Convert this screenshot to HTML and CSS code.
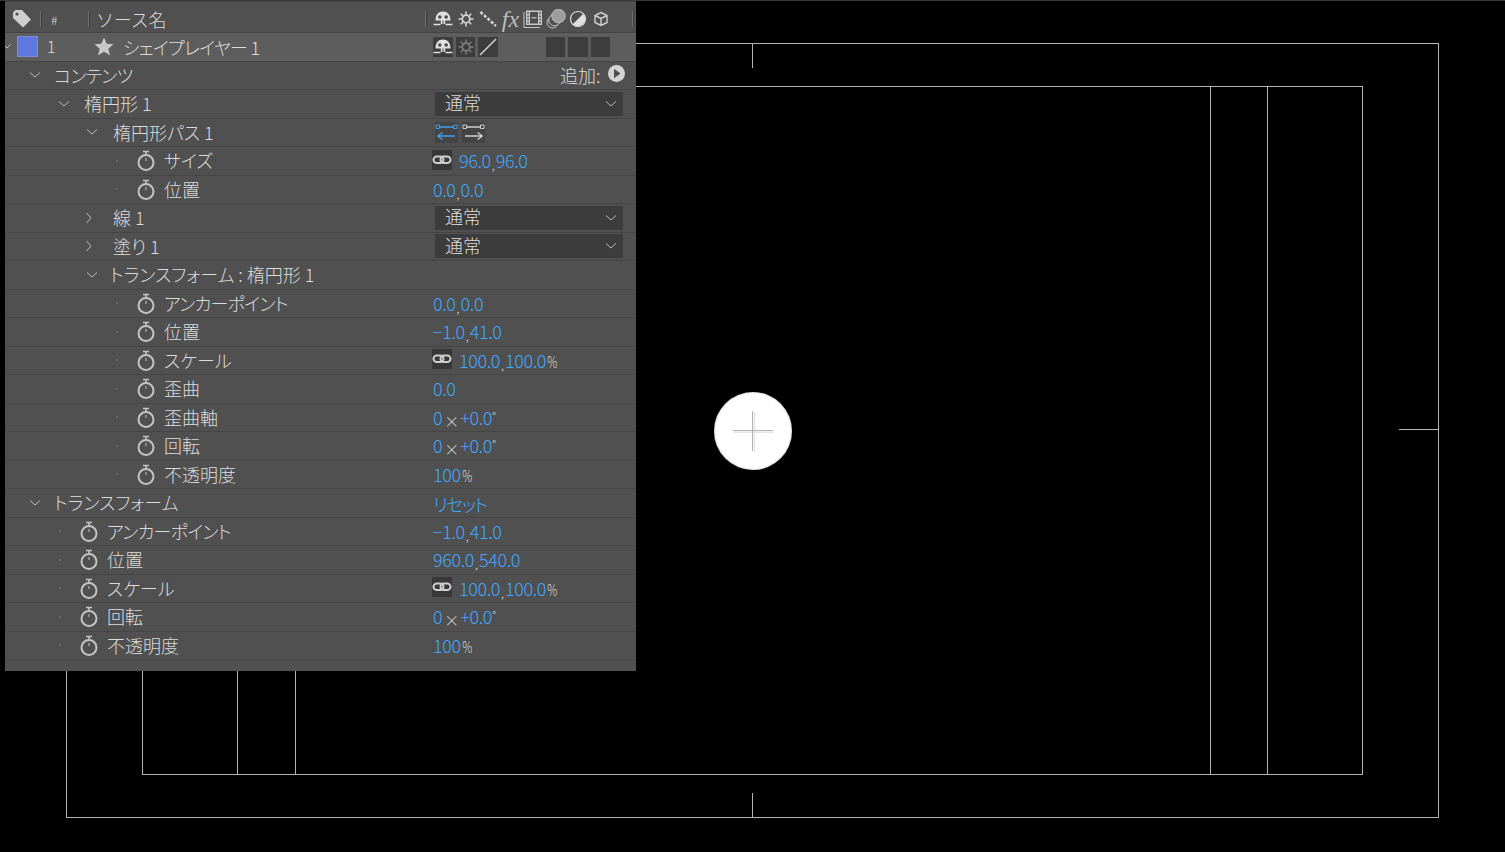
FILE: index.html
```html
<!DOCTYPE html>
<html lang="ja">
<head>
<meta charset="utf-8">
<title>シェイプレイヤー</title>
<link rel="stylesheet" href="styles.css">
</head>
<body>
<svg class="defs" width="0" height="0" aria-hidden="true">
  <symbol id="down" viewBox="0 0 12 8"><path d="M1 1.500 6 6l5-4.500" fill="none" stroke="#bdbdbd" stroke-width="1"/></symbol>
  <symbol id="right" viewBox="0 0 8 12"><path d="M1.500 1 6 6l-4.500 5" fill="none" stroke="#bdbdbd" stroke-width="1"/></symbol>
  <symbol id="watch" viewBox="0 0 18 21"><path d="M6 1.500h6M9 1.500v3" stroke="#c4c4c4" stroke-width="1.600" fill="none"/><circle cx="9" cy="12.500" r="7.500" fill="none" stroke="#c4c4c4" stroke-width="2"/><path d="M9 8v3" stroke="#c4c4c4" stroke-width="1" /></symbol>
  <symbol id="link" viewBox="0 0 20 20"><rect width="20" height="20" fill="#383838"/><rect x="1.500" y="6.500" width="10" height="6.500" rx="3.250" fill="none" stroke="#cfcfcf" stroke-width="2"/><rect x="8.500" y="6.500" width="10" height="6.500" rx="3.250" fill="none" stroke="#cfcfcf" stroke-width="2"/></symbol>
  <symbol id="shy" viewBox="0 0 20 20"><path d="M2.500 11.500C2.500 5.500 5.500 2.500 10 2.500s7.500 3 7.500 9h-5.300v3.500H7.800v-3.500z" fill="#e0e0e0"/><circle cx="6.800" cy="8" r="1.800" fill="#4a4a4a"/><circle cx="13.200" cy="8" r="1.800" fill="#4a4a4a"/><path d="M10 11.500v3.500" stroke="#4a4a4a" stroke-width="1"/><path d="M0.500 15.500h7M12.500 15.500h7" stroke="#e0e0e0" stroke-width="1.300"/></symbol>
  <symbol id="sun" viewBox="0 0 20 20"><circle cx="10" cy="10" r="3.800" fill="none" stroke="currentColor" stroke-width="1.800"/><path d="M10 2.500v3M10 14.500v3M2.500 10h3M14.500 10h3M4.700 4.700l2.100 2.100M13.200 13.200l2.100 2.100M4.700 15.300l2.100-2.100M13.200 6.800l2.100-2.100" stroke="currentColor" stroke-width="1.500"/></symbol>
</svg>

<main class="stage">
  <div class="guide outer"></div>
  <div class="guide inner"></div>
  <div class="guide v1"></div>
  <div class="guide v2"></div>
  <div class="guide v3"></div>
  <div class="guide v4"></div>
  <div class="guide t1"></div>
  <div class="guide t2"></div>
  <div class="guide t3"></div>
  <div class="handle"><svg width="42" height="42" viewBox="0 0 42 42"><path d="M1 21.500h40M21.500 1v40" stroke="#e4e4e4" stroke-width="1.500" transform="translate(.8 .8)"/><path d="M1 20.500h40M20.500 1v40" stroke="#b4b4b4" stroke-width="1"/></svg></div>
</main>

<section class="panel">
  <header class="head">
    <svg class="h-tag" width="20" height="20" viewBox="0 0 20 20"><path d="M1 3.500 3.500 1H10l9 9.500-8 8L1 9z" fill="#cfcfcf"/><circle cx="5" cy="5" r="1.600" fill="#4f4f4f"/></svg>
    <span class="bar b1"></span>
    <span class="hash">#</span>
    <span class="bar b2"></span>
    <span class="src">ソース名</span>
    <span class="bar b3"></span>
    <div class="h-icons">
      <svg class="ic"><use href="#shy"/></svg>
      <svg class="ic sunc"><use href="#sun"/></svg>
      <svg class="ic" viewBox="0 0 20 20"><path d="M2.500 3 18 17" stroke="#d4d4d4" stroke-width="2.600" stroke-dasharray="3 1.700" fill="none"/></svg>
      <span class="fx">fx</span>
      <svg class="ic" viewBox="0 0 20 20"><path d="M1 3v15.500h16" fill="none" stroke="#c8c8c8" stroke-width="1"/><rect x="3" y="1.500" width="16" height="14.500" fill="#c8c8c8"/><rect x="7" y="3" width="8" height="11.500" fill="#4f4f4f"/><path d="M8.500 8.800h5" stroke="#c8c8c8" stroke-width="1.200"/><path d="M4.300 3.200h1.500v1.800H4.300zM4.300 6.500h1.500v1.800H4.300zM4.300 9.800h1.500v1.800H4.300zM4.300 13h1.500v1.500H4.300zM16.300 3.200h1.500v1.800h-1.500zM16.300 6.500h1.500v1.800h-1.500zM16.300 9.800h1.500v1.800h-1.500zM16.300 13h1.500v1.500h-1.500z" fill="#4f4f4f"/></svg>
      <svg class="ic" viewBox="0 0 20 20"><circle cx="6.500" cy="13.500" r="5.500" fill="none" stroke="#c4c4c4"/><circle cx="8.500" cy="11" r="5.800" fill="#505050" stroke="#c4c4c4"/><circle cx="12.500" cy="7" r="6.800" fill="#9c9c9c" stroke="#c8c8c8" stroke-width=".8"/></svg>
      <svg class="ic" viewBox="0 0 20 20"><circle cx="10" cy="10" r="7.500" fill="#4d4d4d" stroke="#dedede" stroke-width="1.200"/><path d="M15.300 4.700A7.500 7.500 0 0 1 4.700 15.300z" fill="#dedede"/></svg>
      <svg class="ic" viewBox="0 0 20 20"><path d="M10 3.500 16 6.500v7l-6 3-6-3v-7zM4 6.500l6 3 6-3M10 9.500v7" fill="none" stroke="#d0d0d0" stroke-width="1.400"/></svg>
    </div>
    <span class="bar b4"></span>
  </header>

  <div class="row layer">
    <div class="name lay">
      <svg class="tw" width="8" height="6" viewBox="0 0 8 6"><path d="M0 2 2 4 6 0" fill="none" stroke="#bdbdbd"/></svg>
      <span class="swatch"></span>
      <span class="num">1</span>
      <svg class="star" width="20" height="19" viewBox="0 0 20 19"><path d="M10 .5l2.700 6.300 6.800.500-5.200 4.400 1.700 6.600L10 14.700l-6 3.600 1.700-6.600L.5 7.300l6.800-.500z" fill="#c8c8c8"/></svg>
      <span class="tight">シェイプレイヤー 1</span>
    </div>
    <div class="switches">
      <span class="sw"><svg class="ic"><use href="#shy"/></svg></span>
      <span class="sw dim"><svg class="ic"><use href="#sun"/></svg></span>
      <span class="sw"><svg class="ic" viewBox="0 0 20 20"><path d="M2 18 18 2" stroke="#cfcfcf" stroke-width="1.600"/></svg></span>
      <span class="sw gap"></span>
      <span class="sw"></span>
      <span class="sw"></span>
    </div>
  </div>

  <div class="row"><div class="name i0"><svg class="chev"><use href="#down"/></svg><span class="tight">コンテンツ</span></div>
    <div class="add"><span>追加:</span><svg width="17" height="17" viewBox="0 0 17 17"><circle cx="8.500" cy="8.500" r="8.500" fill="#d4d4d4"/><path d="M6 3.800 12.500 8.500 6 13.200z" fill="#4d4d4d"/></svg></div></div>
  <div class="row"><div class="name i1"><svg class="chev"><use href="#down"/></svg><span>楕円形 1</span></div>
    <div class="select"><span>通常</span><svg class="chev"><use href="#down"/></svg></div></div>
  <div class="row"><div class="name i2"><svg class="chev"><use href="#down"/></svg><span>楕円形パス 1</span></div>
    <div class="dirs">
      <svg width="23" height="21" viewBox="0 0 23 21"><rect width="23" height="21" fill="#444"/><path d="M3 5h17M3 14h17M2.500 14l5-3.500M2.500 14l5 3.500" stroke="#3b9ff0" stroke-width="1.500" fill="none"/><path d="M1 3h3.500v3.500H1zM18.500 3H22v3.500h-3.500z" fill="#444" stroke="#3b9ff0"/></svg>
      <svg width="23" height="21" viewBox="0 0 23 21"><rect width="23" height="21" fill="#444"/><path d="M3 5h17M3 14h17M20.500 14l-5-3.500M20.500 14l-5 3.500" stroke="#cfcfcf" stroke-width="1.500" fill="none"/><path d="M1 3h3.500v3.500H1zM18.500 3H22v3.500h-3.500z" fill="#444" stroke="#cfcfcf"/></svg>
    </div></div>
  <div class="row"><div class="name p2"><i class="dot"></i><svg class="watch"><use href="#watch"/></svg><span>サイズ</span></div>
    <div class="val"><svg class="lnk"><use href="#link"/></svg><b>96.0</b><em>,</em><b>96.0</b></div></div>
  <div class="row"><div class="name p2"><i class="dot"></i><svg class="watch"><use href="#watch"/></svg><span>位置</span></div>
    <div class="val"><b>0.0</b><em>,</em><b>0.0</b></div></div>
  <div class="row"><div class="name i2c"><svg class="chevr"><use href="#right"/></svg><span>線 1</span></div>
    <div class="select"><span>通常</span><svg class="chev"><use href="#down"/></svg></div></div>
  <div class="row"><div class="name i2c"><svg class="chevr"><use href="#right"/></svg><span>塗り 1</span></div>
    <div class="select"><span>通常</span><svg class="chev"><use href="#down"/></svg></div></div>
  <div class="row"><div class="name i2t"><svg class="chev"><use href="#down"/></svg><span>トランスフォーム : 楕円形 1</span></div></div>
  <div class="row"><div class="name p2"><i class="dot"></i><svg class="watch"><use href="#watch"/></svg><span class="tight">アンカーポイント</span></div>
    <div class="val"><b>0.0</b><em>,</em><b>0.0</b></div></div>
  <div class="row"><div class="name p2"><i class="dot"></i><svg class="watch"><use href="#watch"/></svg><span>位置</span></div>
    <div class="val"><b>−1.0</b><em>,</em><b>41.0</b></div></div>
  <div class="row"><div class="name p2"><i class="dot"></i><svg class="watch"><use href="#watch"/></svg><span>スケール</span></div>
    <div class="val"><svg class="lnk"><use href="#link"/></svg><b>100.0</b><em>,</em><b>100.0</b><small>%</small></div></div>
  <div class="row"><div class="name p2"><i class="dot"></i><svg class="watch"><use href="#watch"/></svg><span>歪曲</span></div>
    <div class="val"><b>0.0</b></div></div>
  <div class="row"><div class="name p2"><i class="dot"></i><svg class="watch"><use href="#watch"/></svg><span>歪曲軸</span></div>
    <div class="val"><b>0</b><small class="x">×</small><b>+0.0</b><small class="deg">°</small></div></div>
  <div class="row"><div class="name p2"><i class="dot"></i><svg class="watch"><use href="#watch"/></svg><span>回転</span></div>
    <div class="val"><b>0</b><small class="x">×</small><b>+0.0</b><small class="deg">°</small></div></div>
  <div class="row"><div class="name p2"><i class="dot"></i><svg class="watch"><use href="#watch"/></svg><span>不透明度</span></div>
    <div class="val"><b>100</b><small>%</small></div></div>
  <div class="row"><div class="name i0t"><svg class="chev"><use href="#down"/></svg><span>トランスフォーム</span></div>
    <div class="val"><b class="reset">リセット</b></div></div>
  <div class="row"><div class="name p0"><i class="dot"></i><svg class="watch"><use href="#watch"/></svg><span class="tight">アンカーポイント</span></div>
    <div class="val"><b>−1.0</b><em>,</em><b>41.0</b></div></div>
  <div class="row"><div class="name p0"><i class="dot"></i><svg class="watch"><use href="#watch"/></svg><span>位置</span></div>
    <div class="val"><b>960.0</b><em>,</em><b>540.0</b></div></div>
  <div class="row"><div class="name p0"><i class="dot"></i><svg class="watch"><use href="#watch"/></svg><span>スケール</span></div>
    <div class="val"><svg class="lnk"><use href="#link"/></svg><b>100.0</b><em>,</em><b>100.0</b><small>%</small></div></div>
  <div class="row"><div class="name p0"><i class="dot"></i><svg class="watch"><use href="#watch"/></svg><span>回転</span></div>
    <div class="val"><b>0</b><small class="x">×</small><b>+0.0</b><small class="deg">°</small></div></div>
  <div class="row"><div class="name p0"><i class="dot"></i><svg class="watch"><use href="#watch"/></svg><span>不透明度</span></div>
    <div class="val"><b>100</b><small>%</small></div></div>
</section>
</body>
</html>
```
FILE: styles.css
```css
html, body { margin: 0; height: 100%; background: #000; overflow: hidden; }
body { font-family: "Noto Sans CJK JP", "Noto Sans", sans-serif; font-weight: 300; color: #dcdcdc; font-size: 18px; font-feature-settings: "palt"; position: relative; }
.defs { position: absolute; }

.stage { position: absolute; inset: 0; border-top: 1px solid #3a3a3a; box-sizing: border-box; }
.guide { position: absolute; background: #b4b4b4; }
.outer { left: 66px; top: 42px; width: 1371px; height: 773px; background: none; border: 1px solid #b4b4b4; }
.inner { left: 142px; top: 85px; width: 1219px; height: 687px; background: none; border: 1px solid #b4b4b4; }
.v1, .v2, .v3, .v4 { top: 85px; width: 1px; height: 688px; }
.v1 { left: 237px; }
.v2 { left: 295px; }
.v3 { left: 1210px; }
.v4 { left: 1267px; }
.t1, .t2 { left: 752px; width: 1px; height: 24px; }
.t1 { top: 43px; }
.t2 { top: 792px; }
.t3 { left: 1399px; top: 428px; width: 39px; height: 1px; }
.handle { position: absolute; left: 714px; top: 391px; width: 78px; height: 78px; border-radius: 50%; background: #fff; box-shadow: inset 0 0 2px #999; display: flex; align-items: center; justify-content: center; }

.panel { position: absolute; left: 5px; top: 1px; width: 631px; height: 670px; background: #505050; }
.head { height: 32px; box-sizing: border-box; padding-top: 4px; display: flex; align-items: center; border-top: 1px solid #454545; border-bottom: 1px solid #444; }
.h-tag { margin-left: 7px; }
.bar { width: 1px; height: 16px; background: #6e6e6e; border-right: 1px solid #3c3c3c; flex: none; }
.b1 { margin-left: 8px; }
.hash { font-size: 12px; margin-left: 9px; width: 37px; }
.src { margin-left: 6px; width: 329px; font-size: 18px; font-feature-settings: normal; letter-spacing: -0.2px; }
.h-icons { display: flex; gap: 2.500px; margin-left: 6px; width: 199px; }
.ic { width: 20px; height: 20px; display: block; flex: none; }
.sunc { color: #d8d8d8; }
.fx { width: 20px; font: italic 24px/20px "Liberation Serif", serif; color: #bcbcbc; text-align: center; }

.row { height: 28.500px; box-sizing: border-box; display: flex; align-items: center; border-bottom: 1px solid #454545; line-height: 27px; }
.name { width: 428px; flex: none; display: flex; align-items: center; box-sizing: border-box; white-space: nowrap; }
.tight { letter-spacing: -0.7px; }
.lay .tight { margin-top: 2px; }
.chev { width: 12px; height: 8px; flex: none; margin-right: 13px; }
.chevr { width: 8px; height: 12px; flex: none; margin-right: 20px; }
.i0 { padding-left: 24px; }
.i0t { padding-left: 24px; }
.i0t .chev { margin-right: 13px; }
.i1 { padding-left: 53px; }
.i1 .chev { margin-right: 14px; }
.i2 { padding-left: 81px; }
.i2 .chev { margin-right: 15px; }
.i2c { padding-left: 80px; }
.i2t { padding-left: 81px; }
.i2t .chev { margin-right: 12px; }
.p2 { padding-left: 111px; }
.p0 { padding-left: 54px; }
.dot { width: 2px; height: 2px; background: #6b6b6b; flex: none; margin-right: 19px; }
.watch { width: 18px; height: 21px; flex: none; margin-right: 9px; }

.layer { background: #5d5d5d; }
.lay .tw { margin-right: 4px; }
.swatch { width: 21px; height: 21px; background: #5f78e0; flex: none; box-sizing: border-box; border: 1px solid #7a8cd8; margin-right: 9px; }
.num { width: 47px; font-size: 16px; }
.star { margin-right: 9px; flex: none; }
.switches { display: flex; gap: 3px; }
.sw { width: 19.500px; height: 20px; background: #3d3d3d; display: block; }
.dim { color: #7e7e7e; }
.gap { margin-left: 45px; }

.select { margin-left: 2px; width: 188px; height: 24px; background: #3c3c3c; display: flex; align-items: center; justify-content: space-between; box-sizing: border-box; padding-left: 10px; font-size: 18px; }
.select span { margin-top: -2px; }
.select .chev { margin-right: 6px; }
.add { margin-left: 127px; display: flex; align-items: center; gap: 7px; }
.add svg { margin-top: -3px; }
.dirs { display: flex; gap: 4px; margin-left: 2px; }
.val { display: flex; align-items: center; color: #42a8ff; font-size: 18px; }
.val b { font-weight: 300; letter-spacing: -0.4px; }
.val b.reset { letter-spacing: -1.500px; margin-top: 4px; }
.val em { font-style: normal; font-size: 12px; color: #ddd; margin-top: 8px; width: 5px; text-align: center; }
.val small { font-size: 16px; color: #dcdcdc; margin-left: -1px; margin-top: 2px; transform: scaleX(.7); }
.val small.x { font-size: 15px; margin: 6px 1px 0 2px; transform: none; }
.val small.deg { font-size: 12px; margin-top: -4px; margin-left: 0; transform: none; }
.lnk { width: 20px; height: 20px; flex: none; margin-right: 7px; margin-top: -2px; margin-left: -1px; }
```
